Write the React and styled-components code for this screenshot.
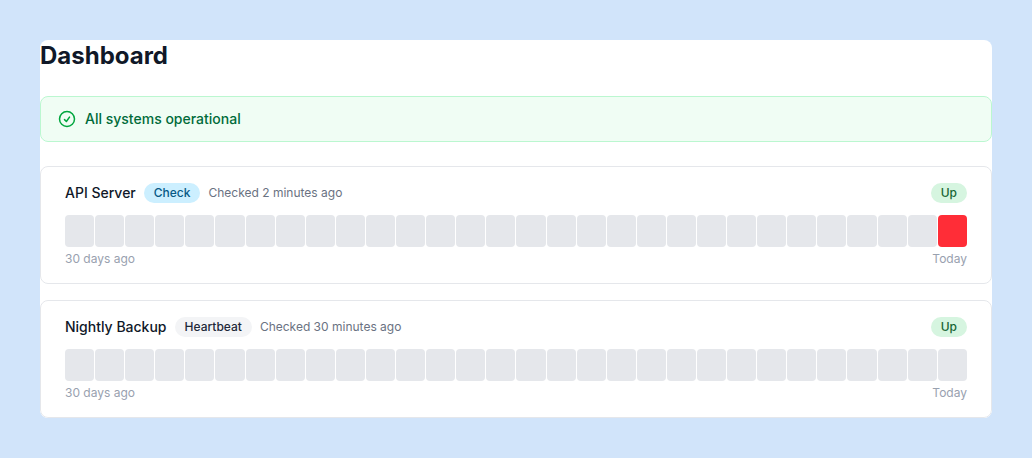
import React from 'react';
import styled, { createGlobalStyle } from 'styled-components';
import { HiOutlineCheckCircle } from 'react-icons/hi2';

const GlobalStyle = createGlobalStyle`
    * {
        box-sizing: border-box;
    }
    body {
        margin: 0;
        font-family: Inter, "Liberation Sans", sans-serif;
        -webkit-font-smoothing: antialiased;
        background: #d1e4fa;
    }
`
const Page = styled.div`
    min-height: 100vh;
    padding: 40px;
`
const Shell = styled.main`
    display: flex;
    flex-direction: column;
    background: #ffffff;
    border-radius: 8px;
    overflow: hidden;
`
const Title = styled.h1`
    margin: 0 0 24px;
    font-size: 24px;
    line-height: 32px;
    font-weight: 700;
    color: #101828;
`
const Banner = styled.div`
    display: flex;
    align-items: center;
    gap: 8px;
    margin-bottom: 24px;
    padding: 12px 16px;
    background: #f0fdf4;
    border: 1px solid #bbf7d0;
    border-radius: 8px;
    font-size: 14px;
    line-height: 20px;
    font-weight: 500;
    color: #006b3a;
    svg {
        color: #00a63e;
    }
`
const List = styled.div`
    display: flex;
    flex-direction: column;
    gap: 16px;
`
const Monitor = styled.section`
    padding: 16px 24px;
    border: 1px solid #e5e7eb;
    border-radius: 8px;
`
const Header = styled.div`
    display: flex;
    align-items: center;
    justify-content: space-between;
    margin-bottom: 12px;
`
const HeaderLeft = styled.div`
    display: flex;
    align-items: center;
    gap: 8px;
`
const Name = styled.span`
    font-size: 14px;
    line-height: 20px;
    font-weight: 500;
    color: #101828;
`
const Badge = styled.span`
    display: inline-flex;
    align-items: center;
    height: 20px;
    padding: 0 10px;
    border-radius: 999px;
    font-size: 12px;
    line-height: 16px;
    font-weight: 500;
    background: ${props => props.$bg};
    color: ${props => props.$color};
`
const Checked = styled.span`
    font-size: 12px;
    line-height: 16px;
    color: #6a7282;
`
const Bars = styled.div`
    display: flex;
    gap: 1px;
    height: 32px;
`
const Bar = styled.div`
    flex: 1;
    border-radius: 4px;
    background: ${props => props.$down ? '#ff2d37' : '#e5e7eb'};
`
const Footer = styled.div`
    display: flex;
    justify-content: space-between;
    margin-top: 4px;
    font-size: 12px;
    line-height: 16px;
    color: #99a1af;
`

const monitors = [
    { name: 'API Server', type: 'Check', bg: '#ccefff', color: '#075985', checked: 'Checked 2 minutes ago', down: true },
    { name: 'Nightly Backup', type: 'Heartbeat', bg: '#f3f4f6', color: '#1e2939', checked: 'Checked 30 minutes ago', down: false },
];

export default function App() {
    return (
        <Page>
            <GlobalStyle />
            <Shell>
                <Title>Dashboard</Title>
                <Banner>
                    <HiOutlineCheckCircle size={20} strokeWidth={1.8} />
                    All systems operational
                </Banner>
                <List>
                    {monitors.map(m => (
                        <Monitor key={m.name}>
                            <Header>
                                <HeaderLeft>
                                    <Name>{m.name}</Name>
                                    <Badge $bg={m.bg} $color={m.color}>{m.type}</Badge>
                                    <Checked>{m.checked}</Checked>
                                </HeaderLeft>
                                <Badge $bg="#d6f5e0" $color="#166534">Up</Badge>
                            </Header>
                            <Bars>
                                {Array.from({ length: 30 }, (_, i) => (
                                    <Bar key={i} $down={m.down && i === 29} />
                                ))}
                            </Bars>
                            <Footer>
                                <span>30 days ago</span>
                                <span>Today</span>
                            </Footer>
                        </Monitor>
                    ))}
                </List>
            </Shell>
        </Page>
    )
}
